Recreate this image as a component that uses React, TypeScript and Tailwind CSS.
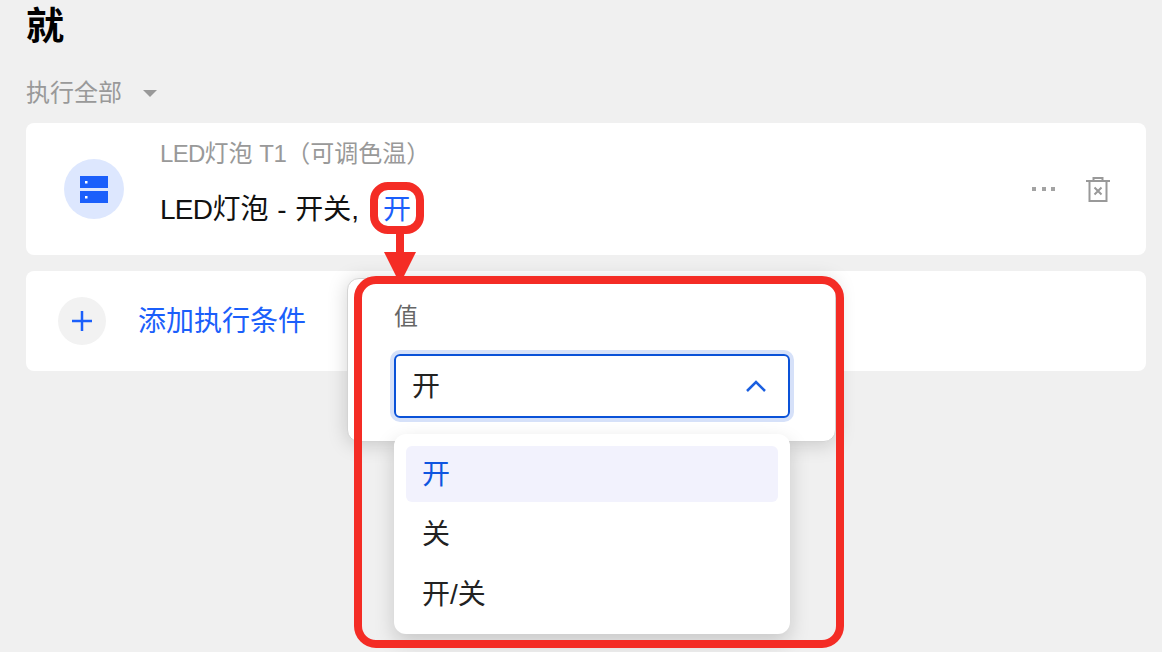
export default function App() {
  const font = 'font-["Liberation_Sans","Noto_Sans_CJK_SC",sans-serif]';
  return (
    <div className={`relative h-[652px] w-[1162px] overflow-hidden bg-[#f0f0f0] pl-[26px] pr-[16px] ${font}`}>
      <h1 className="h-[54px] pt-[1px] text-[38px] leading-[50px] font-bold text-black">就</h1>
      <div className="mt-[19px] flex h-[40px] items-center text-[24px] text-[#999999]">
        <span>执行全部</span>
        <svg className="ml-[21px] mt-[1px]" width="14" height="7" viewBox="0 0 14 7"><path d="M0 0h14L7 7z" fill="#999999" /></svg>
      </div>
      <section className="mt-[10px] flex h-[132px] items-center rounded-[8px] bg-white pl-[38px] pr-[36px]">
        <div className="flex h-[60px] w-[60px] items-center justify-center rounded-full bg-[#dde7fe]">
          <svg width="28" height="27" viewBox="0 0 28 27">
            <rect x="0" y="0" width="28" height="12" fill="#1b5ffb" />
            <rect x="0" y="15" width="28" height="12" fill="#1b5ffb" />
            <rect x="5" y="5" width="2.5" height="2.5" fill="#fff" />
            <rect x="5" y="20" width="2.5" height="2.5" fill="#fff" />
          </svg>
        </div>
        <div className="ml-[36px] flex-1 self-start">
          <div className="mt-[13px] h-[36px] text-[24px] leading-[36px] text-[#999999]">
            <span className="tracking-[-0.7px]">LED</span>灯泡 <span className="tracking-[-0.5px]">T1</span>（可调色温）
          </div>
          <div className="mt-[18px] flex h-[40px] items-center text-[28px] text-[#111111]">
            <span className="[word-spacing:1px]"><span className="tracking-[-0.7px]">LED</span>灯泡 - 开关,</span>
            <span className="ml-[24px] text-[#1b5ffb]">开</span>
          </div>
        </div>
        <svg width="24" height="6" viewBox="0 0 24 6" className="mb-[1px]">
          <rect x="0" y="1" width="4" height="4" fill="#a3a3a3" />
          <rect x="10" y="1" width="4" height="4" fill="#a3a3a3" />
          <rect x="19" y="1" width="4" height="4" fill="#a3a3a3" />
        </svg>
        <svg className="ml-[30px]" width="24" height="26" viewBox="0 0 24 26" fill="none" stroke="#999999" strokeWidth="2">
          <path d="M0 5h24M7.5 5V2h9v3M3.5 5v20h17V5M8.5 11.5l7 7M15.5 11.5l-7 7" />
        </svg>
      </section>
      <section className="mt-[16px] flex h-[100px] items-center rounded-[8px] bg-white pl-[32px]">
        <div className="flex h-[48px] w-[48px] items-center justify-center rounded-full bg-[#f2f2f2]">
          <svg width="20" height="20" viewBox="0 0 20 20" stroke="#1b5ffb" strokeWidth="2.5"><path d="M0 10h20M10 0v20" /></svg>
        </div>
        <span className="ml-[32px] pt-[2px] text-[28px] text-[#1b5ffb]">添加执行条件</span>
      </section>

      {/* popover */}
      <div className="absolute left-[347px] top-[278px] h-[164px] w-[489px] rounded-[12px] border border-[#d4d4d4] bg-white pl-[46px] pt-[20px] shadow-[0_2px_20px_rgba(0,0,0,0.18)]">
        <div className="h-[36px] text-[24px] leading-[36px] text-[#666666]">值</div>
        <div className="mt-[19px] flex h-[64px] w-[396px] items-center justify-between rounded-[6px] border-2 border-[#0a52d8] pl-[16px] pr-[22px] text-[28px] text-[#222222] ring-4 ring-[#d6e1f9]">
          <span className="pt-[2px]">开</span>
          <svg width="20" height="12" viewBox="0 0 20 12" fill="none" stroke="#1b5fe0" strokeWidth="2.5"><path d="M1 11l9-9 9 9" /></svg>
        </div>
      </div>

      {/* dropdown */}
      <div className="absolute left-[394px] top-[434px] h-[200px] w-[396px] rounded-[12px] bg-white p-[12px] text-[28px] text-[#222222] shadow-[0_8px_20px_rgba(0,0,0,0.17)]">
        <div className="flex h-[56px] items-center rounded-[6px] bg-[#f2f2fd] pl-[16px] pt-[2px] text-[#0f55e0]">开</div>
        <div className="mt-[4px] flex h-[56px] items-center pl-[16px] pt-[2px]">关</div>
        <div className="mt-[4px] flex h-[56px] items-center pl-[16px] pt-[2px]">开/关</div>
      </div>

      {/* annotations */}
      <div className="absolute left-[370px] top-[182px] h-[52px] w-[54px] rounded-[18px] border-[8px] border-[#f42c25]" />
      <svg className="absolute left-[384px] top-[234px]" width="32" height="50" viewBox="0 0 32 50">
        <path d="M12 0h8v18h12L16 50 0 18h12z" fill="#f42c25" />
      </svg>
      <div className="absolute left-[354px] top-[276px] h-[372px] w-[490px] rounded-[22px] border-[8px] border-[#f42c25]" />
    </div>
  );
}
